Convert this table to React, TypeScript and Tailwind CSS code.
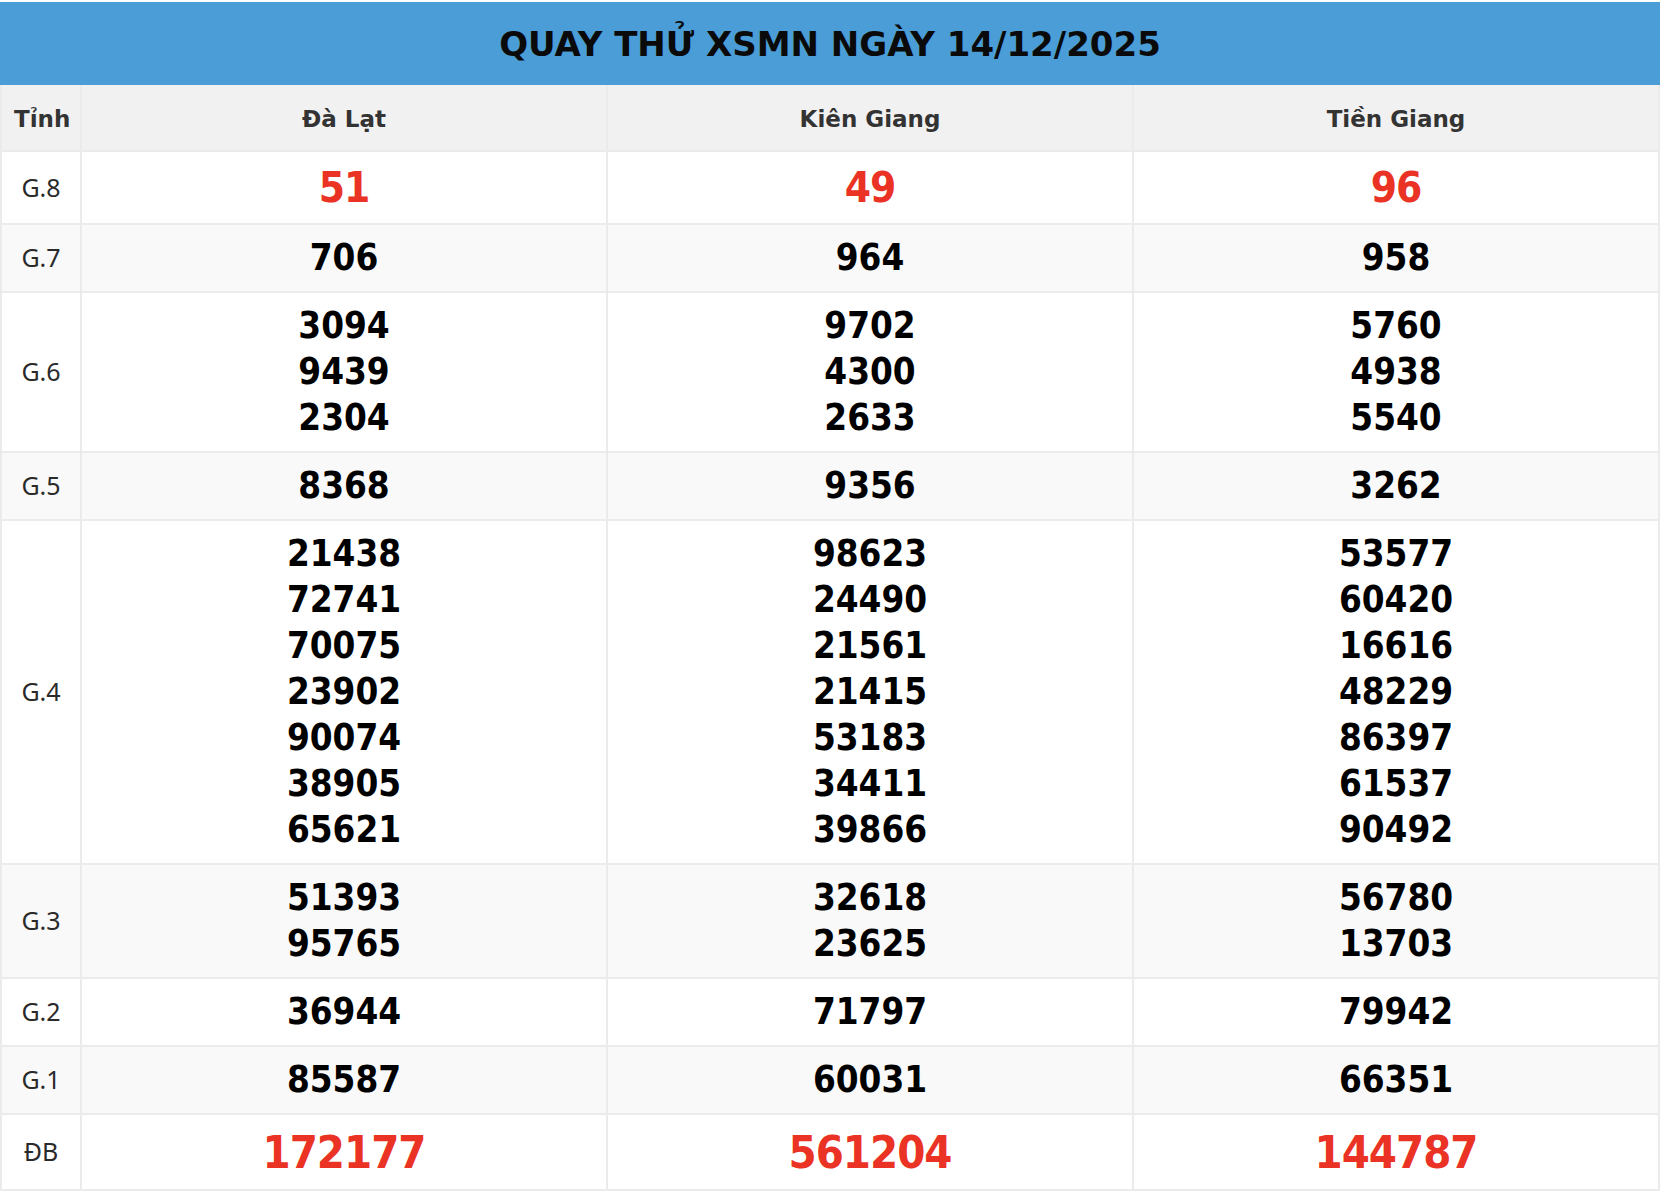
// Bảng quay thử XSMN – 3 đài, giải 8 -> đặc biệt

type Giai = {
  ten: string;
  so: string[][]; // mỗi đài một mảng số
  kieu?: 'g8' | 'db';
};

const DAI = ['Đà Lạt', 'Kiên Giang', 'Tiền Giang'];

const KET_QUA: Giai[] = [
  { ten: 'G.8', so: [['51'], ['49'], ['96']], kieu: 'g8' },
  { ten: 'G.7', so: [['706'], ['964'], ['958']] },
  { ten: 'G.6', so: [['3094', '9439', '2304'], ['9702', '4300', '2633'], ['5760', '4938', '5540']] },
  { ten: 'G.5', so: [['8368'], ['9356'], ['3262']] },
  {
    ten: 'G.4',
    so: [
      ['21438', '72741', '70075', '23902', '90074', '38905', '65621'],
      ['98623', '24490', '21561', '21415', '53183', '34411', '39866'],
      ['53577', '60420', '16616', '48229', '86397', '61537', '90492'],
    ],
  },
  { ten: 'G.3', so: [['51393', '95765'], ['32618', '23625'], ['56780', '13703']] },
  { ten: 'G.2', so: [['36944'], ['71797'], ['79942']] },
  { ten: 'G.1', so: [['85587'], ['60031'], ['66351']] },
  { ten: 'ĐB', so: [['172177'], ['561204'], ['144787']], kieu: 'db' },
];

function OSo(props: { giai: Giai; list: string[] }) {
  const g = props.giai;
  if (g.kieu === 'g8') {
    return (
      <div className="text-[42px] leading-[51px] font-bold text-[#ea3324] tracking-[-1px]">
        {props.list[0]}
      </div>
    );
  }
  if (g.kieu === 'db') {
    return (
      <div className="text-[45px] leading-[52px] font-bold text-[#ea3324] tracking-[-1px] pt-[2px]">
        {props.list[0]}
      </div>
    );
  }
  return (
    <div className="text-[36.5px] leading-[46px] font-bold text-black">
      {props.list.map(function (s, i) {
        return <div key={i}>{s}</div>;
      })}
    </div>
  );
}

export default function App() {
  return (
    <div className="bg-white min-h-[1192px] pt-[2px] font-['DejaVu_Sans_Condensed','DejaVu_Sans',sans-serif]">
      <div className="w-[1660px]">
        {/* Tiêu đề */}
        <div className="bg-[#4a9dd6] h-[83px] flex items-center justify-center">
          <h1 className="text-[34px] font-bold text-[#0a0a0a] font-['DejaVu_Sans',sans-serif] pt-[2px]">
            QUAY THỬ XSMN NGÀY 14/12/2025
          </h1>
        </div>

        <table className="w-full border-collapse table-fixed">
          <colgroup>
            <col className="w-[80px]" />
            <col />
            <col />
            <col />
          </colgroup>
          <thead>
            <tr className="bg-[#f1f1f1] h-[66px] font-['DejaVu_Sans',sans-serif]">
              <th className="border-2 border-[#ebebeb] border-t-0 text-left pl-[12px] pt-[4px] text-[23px] font-bold text-[#333]">Tỉnh</th>
              {DAI.map(function (d) {
                return (
                  <th key={d} className="border-2 border-[#ebebeb] border-t-0 text-center pt-[4px] text-[23px] font-bold text-[#333]">
                    {d}
                  </th>
                );
              })}
            </tr>
          </thead>
          <tbody>
            {KET_QUA.map(function (g, idx) {
              var nen = idx % 2 === 1 ? 'bg-[#f9f9f9]' : 'bg-white';
              return (
                <tr key={g.ten} className={nen}>
                  <td className="border-2 border-[#ebebeb] text-center text-[25px] text-[#2a2a2a] font-['Noto_Sans',sans-serif]">
                    {g.ten}
                  </td>
                  {g.so.map(function (list, i) {
                    return (
                      <td key={i} className="border-2 border-[#ebebeb] text-center py-[10px]">
                        <OSo giai={g} list={list} />
                      </td>
                    );
                  })}
                </tr>
              );
            })}
          </tbody>
        </table>
      </div>
    </div>
  );
}
